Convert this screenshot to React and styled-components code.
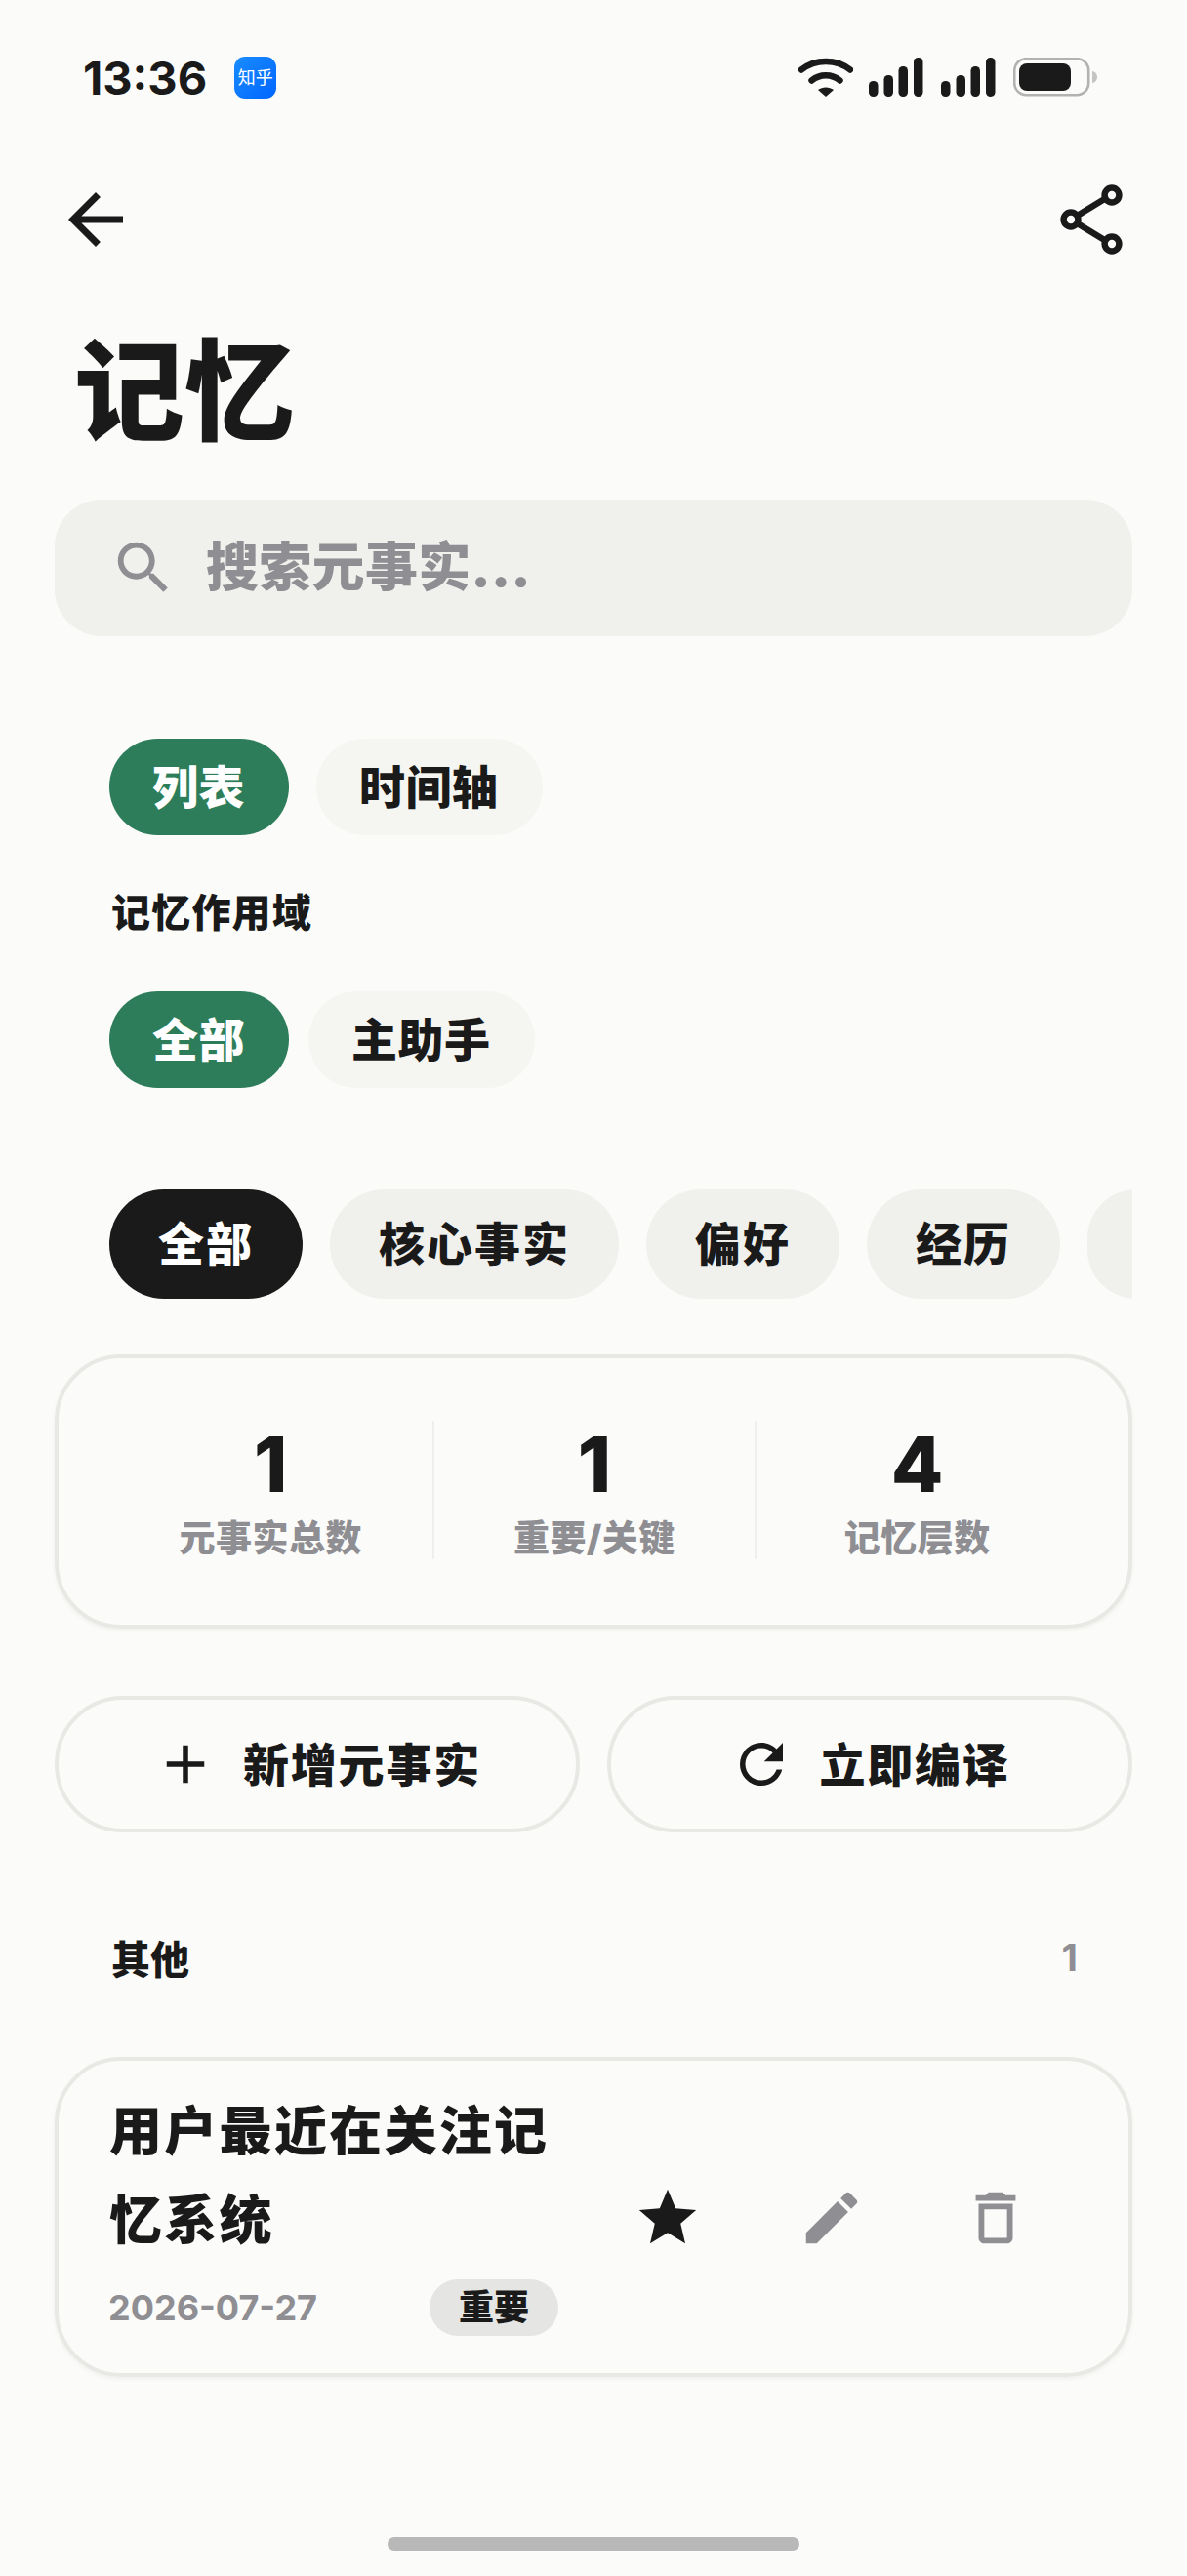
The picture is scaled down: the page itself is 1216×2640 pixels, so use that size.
import React from 'react';
import styled, { createGlobalStyle } from 'styled-components';

const Global = createGlobalStyle`
  html, body { margin: 0; padding: 0; background: #fbfbf9; }
  * { box-sizing: border-box; }
`;

const ink = '#1a1a1a';
const grey = '#8e8e93';

const Page = styled.div`
  width: 1216px;
  height: 2640px;
  position: relative;
  overflow: hidden;
  background: #fbfbf9;
  color: ${ink};
  font-family: Inter, "Noto Sans CJK SC", sans-serif;
`;
const StatusBar = styled.div`
  height: 160px;
  padding: 58px 90px 0 85px;
  display: flex;
  justify-content: space-between;
  align-items: flex-start;
`;
const StatusLeft = styled.div`
  display: flex;
  align-items: center;
  gap: 28px;
  height: 43px;
`;
const Time = styled.span`
  font-size: 47px;
  font-weight: 700;
  line-height: 43px;
  letter-spacing: 0;
`;
const AppBadge = styled.span`
  width: 43px;
  height: 43px;
  border-radius: 11px;
  background: linear-gradient(135deg, #1a8cff, #0066ff);
  color: #fff;
  font-size: 18px;
  line-height: 43px;
  text-align: center;
  font-weight: 400;
  white-space: nowrap;
`;
const StatusRight = styled.div`
  display: flex;
  align-items: flex-start;
  padding-top: 1px;
  gap: 0;
`;
const Header = styled.div`
  height: 130px;
  padding: 0 64px 0 56px;
  display: flex;
  justify-content: space-between;
  align-items: center;
`;
const Title = styled.h1`
  margin: 0;
  padding: 0 0 0 76px;
  height: 222px;
  font-size: 113px;
  line-height: 222px;
  font-weight: 900;
  letter-spacing: 0;
`;
const Search = styled.div`
  margin: 0 56px;
  height: 140px;
  border-radius: 48px;
  background: #f0f0ed;
  display: flex;
  align-items: center;
  padding-left: 56px;
  gap: 29px;
`;
const SearchText = styled.span`
  color: ${grey};
  font-size: 54px;
  font-weight: 900;
  letter-spacing: 0.3px;
  padding-bottom: 10px;
`;
const ChipRow = styled.div`
  display: flex;
  padding: 0 112px;
  gap: ${p => p.$gap}px;
  margin-top: ${p => p.$top}px;
`;
const Chip = styled.div`
  height: 99px;
  padding: 0 45px 0 44px;
  border-radius: 50px;
  background: ${p => (p.$active ? '#2d7d5a' : '#f5f5f2')};
  color: ${p => (p.$active ? '#fff' : ink)};
  font-size: 47px;
  font-weight: 900;
  line-height: 99px;
  white-space: nowrap;
  letter-spacing: 0.5px;
`;
const ScopeLabel = styled.div`
  margin: 52px 0 0 114px;
  height: 56px;
  font-size: 40px;
  line-height: 56px;
  font-weight: 900;
  letter-spacing: 1.2px;
`;
const CategoryRow = styled.div`
  margin: 104px 56px 0;
  padding-left: 56px;
  display: flex;
  gap: 28px;
  overflow: hidden;
`;
const Category = styled.div`
  flex: none;
  height: 112px;
  padding: 0 50px;
  border-radius: 56px;
  background: ${p => (p.$active ? ink : '#f0f0ed')};
  color: ${p => (p.$active ? '#fff' : ink)};
  font-size: 47px;
  font-weight: 900;
  line-height: 112px;
  white-space: nowrap;
  letter-spacing: 2px;
`;
const StatsCard = styled.div`
  margin: 57px 56px 0;
  height: 281px;
  border: 4px solid #e8e8e5;
  border-radius: 68px;
  box-shadow: 0 2px 4px rgba(0, 0, 0, 0.05);
  display: grid;
  grid-template-columns: 1fr 1fr 1fr;
  padding: 64px 52px 0;
  align-items: start;
`;
const Stat = styled.div`
  height: 142px;
  text-align: center;
  border-left: ${p => (p.$divider ? '2px solid #efefec' : 'none')};
`;
const StatNumber = styled.div`
  font-size: 78px;
  line-height: 76px;
  font-weight: 800;
  margin-top: 7px;
`;
const StatLabel = styled.div`
  color: ${grey};
  font-size: 37px;
  font-weight: 900;
  line-height: 52px;
  margin-top: 12px;
  letter-spacing: 0.5px;
`;
const Actions = styled.div`
  margin: 69px 56px 0;
  display: grid;
  grid-template-columns: 1fr 1fr;
  gap: 28px;
`;
const ActionButton = styled.div`
  height: 140px;
  border: 4px solid #e8e8e5;
  border-radius: 70px;
  display: flex;
  align-items: center;
  justify-content: center;
  gap: 26px;
  font-size: 47px;
  font-weight: 900;
  letter-spacing: 1.8px;
`;
const ActionLabel = styled.span`
  padding-bottom: 6px;
`;
const SectionHead = styled.div`
  margin: 98px 112px 0 114px;
  height: 60px;
  display: flex;
  justify-content: space-between;
  align-items: center;
  font-size: 40px;
  font-weight: 900;
`;
const Count = styled.span`
  color: ${grey};
  font-size: 38px;
  font-weight: 700;
`;
const FactCard = styled.div`
  margin: 72px 56px 0;
  height: 328px;
  border: 4px solid #e8e8e5;
  border-radius: 68px;
  box-shadow: 0 2px 4px rgba(0, 0, 0, 0.05);
  padding: 27px 52px 0;
  display: flex;
  align-items: flex-start;
  justify-content: space-between;
`;
const FactBody = styled.div`
  width: 540px;
`;
const FactTitle = styled.div`
  font-size: 54px;
  line-height: 91px;
  font-weight: 900;
  letter-spacing: 2.3px;
  width: 480px;
`;
const FactMeta = styled.div`
  display: flex;
  align-items: center;
  margin: 15px 0 0 -1px;
`;
const FactDate = styled.span`
  width: 329px;
  color: ${grey};
  font-size: 36px;
  font-weight: 700;
`;
const Tag = styled.span`
  width: 132px;
  height: 58px;
  border-radius: 29px;
  background: #e5e5e3;
  font-size: 36px;
  line-height: 58px;
  text-align: center;
  font-weight: 900;
`;
const FactActions = styled.div`
  display: flex;
  gap: 98px;
  margin: 99px 49px 0 0;
`;
const HomeBar = styled.div`
  position: absolute;
  left: 397px;
  top: 2600px;
  width: 422px;
  height: 14px;
  border-radius: 7px;
  background: #b8b8b8;
`;
const Icon = styled.svg`
  display: block;
  flex: none;
  fill: ${p => p.$color || ink};
`;
const MI = ({ d, size, color }) => (
  <Icon width={size} height={size} viewBox="0 0 24 24" $color={color}><path d={d} /></Icon>
);

const P = {
  back: 'M20 11H7.83l5.59-5.59L12 4l-8 8 8 8 1.41-1.41L7.83 13H20v-2z',
  search: 'M15.5 14h-.79l-.28-.27C15.41 12.59 16 11.11 16 9.5 16 5.91 13.09 3 9.5 3S3 5.91 3 9.5 5.91 16 9.5 16c1.61 0 3.09-.59 4.23-1.57l.27.28v.79l5 4.99L20.49 19l-4.99-5zm-6 0C7.01 14 5 11.99 5 9.5S7.01 5 9.5 5 14 7.01 14 9.5 11.99 14 9.5 14z',
  add: 'M19 13h-6v6h-2v-6H5v-2h6V5h2v6h6v2z',
  refresh: 'M17.65 6.35C16.2 4.9 14.21 4 12 4c-4.42 0-7.99 3.58-7.99 8s3.57 8 7.99 8c3.73 0 6.84-2.55 7.73-6h-2.08c-.82 2.33-3.04 4-5.65 4-3.31 0-6-2.69-6-6s2.69-6 6-6c1.66 0 3.14.69 4.22 1.78L13 11h7V4l-2.35 2.35z',
  star: 'M12 17.27L18.18 21l-1.64-7.03L22 9.24l-7.19-.61L12 2 9.19 8.63 2 9.24l5.46 4.73L5.82 21z',
  edit: 'M3 17.25V21h3.75L17.81 9.94l-3.75-3.75L3 17.25zM20.71 7.04c.39-.39.39-1.02 0-1.41l-2.34-2.34c-.39-.39-1.02-.39-1.41 0l-1.83 1.83 3.75 3.75 1.83-1.83z',
  trash: 'M6 19c0 1.1.9 2 2 2h8c1.1 0 2-.9 2-2V7H6v12zM8 9h8v10H8V9zm7.5-5l-1-1h-5l-1 1H5v2h14V4h-3.5z',
};

const Wifi = () => (
  <svg width="56" height="40" viewBox="0 0 56 40" style={{ display: 'block', marginRight: 16 }} fill="none" stroke={ink} strokeLinecap="round">
    <path d="M3 12.5C17 1 39 1 53 12.5" strokeWidth="6.5" />
    <path d="M13.5 23.5C22 16.5 34 16.5 42.5 23.5" strokeWidth="6.5" />
    <path d="M20 33l8 7 8-7c-4.5-3.5-11.5-3.5-16 0z" fill={ink} stroke="none" />
  </svg>
);
const Signal = () => (
  <svg width="56" height="40" viewBox="0 0 56 40" style={{ display: 'block', marginRight: 18 }} fill={ink}>
    <rect x="0" y="24" width="9.5" height="16" rx="4.5" />
    <rect x="15.5" y="18" width="9.5" height="22" rx="4.5" />
    <rect x="30.5" y="9" width="9.5" height="31" rx="4.5" />
    <rect x="46" y="0" width="9.5" height="40" rx="4.5" />
  </svg>
);
const Battery = () => (
  <svg width="88" height="40" viewBox="0 0 88 40" style={{ display: 'block' }}>
    <rect x="1.2" y="1.2" width="76" height="37" rx="12" fill="none" stroke="#b2b2b0" strokeWidth="2.6" />
    <rect x="6" y="6" width="53" height="28" rx="8" fill={ink} />
    <path d="M81 14c3 .5 5 3 5 6s-2 5.500-5 6z" fill="#c4c4c2" />
  </svg>
);
const Share = () => (
  <svg width="68" height="76" viewBox="0 0 68 76" style={{ display: 'block' }} fill="none" stroke={ink} strokeWidth="6.5">
    <path d="M13 38L54 13M13 38L54 63" />
    <circle cx="13" cy="38" r="7.400" fill="#fbfbf9" />
    <circle cx="55" cy="13" r="7.400" fill="#fbfbf9" />
    <circle cx="55" cy="63" r="7.400" fill="#fbfbf9" />
  </svg>
);

export default function App() {
  return (
    <Page>
      <Global />
      <StatusBar>
        <StatusLeft>
          <Time>13:36</Time>
          <AppBadge>知乎</AppBadge>
        </StatusLeft>
        <StatusRight>
          <Wifi />
          <Signal />
          <Signal />
          <Battery />
        </StatusRight>
      </StatusBar>
      <Header>
        <MI d={P.back} size={84} />
        <Share />
      </Header>
      <Title>记忆</Title>
      <Search>
        <MI d={P.search} size={70} color={grey} />
        <SearchText>搜索元事实...</SearchText>
      </Search>
      <ChipRow $gap={28} $top={105}>
        <Chip $active>列表</Chip>
        <Chip>时间轴</Chip>
      </ChipRow>
      <ScopeLabel>记忆作用域</ScopeLabel>
      <ChipRow $gap={20} $top={52}>
        <Chip $active>全部</Chip>
        <Chip>主助手</Chip>
      </ChipRow>
      <CategoryRow>
        <Category $active>全部</Category>
        <Category>核心事实</Category>
        <Category>偏好</Category>
        <Category>经历</Category>
        <Category aria-hidden="true" />
      </CategoryRow>
      <StatsCard>
        <Stat><StatNumber>1</StatNumber><StatLabel>元事实总数</StatLabel></Stat>
        <Stat $divider><StatNumber>1</StatNumber><StatLabel>重要/关键</StatLabel></Stat>
        <Stat $divider><StatNumber>4</StatNumber><StatLabel>记忆层数</StatLabel></Stat>
      </StatsCard>
      <Actions>
        <ActionButton><MI d={P.add} size={66} /><ActionLabel>新增元事实</ActionLabel></ActionButton>
        <ActionButton><MI d={P.refresh} size={66} /><ActionLabel>立即编译</ActionLabel></ActionButton>
      </Actions>
      <SectionHead>
        <span>其他</span>
        <Count>1</Count>
      </SectionHead>
      <FactCard>
        <FactBody>
          <FactTitle>用户最近在关注记忆系统</FactTitle>
          <FactMeta>
            <FactDate>2026-07-27</FactDate>
            <Tag>重要</Tag>
          </FactMeta>
        </FactBody>
        <FactActions>
          <MI d={P.star} size={70} />
          <MI d={P.edit} size={70} color={grey} />
          <MI d={P.trash} size={70} color={grey} />
        </FactActions>
      </FactCard>
      <HomeBar />
    </Page>
  );
}
